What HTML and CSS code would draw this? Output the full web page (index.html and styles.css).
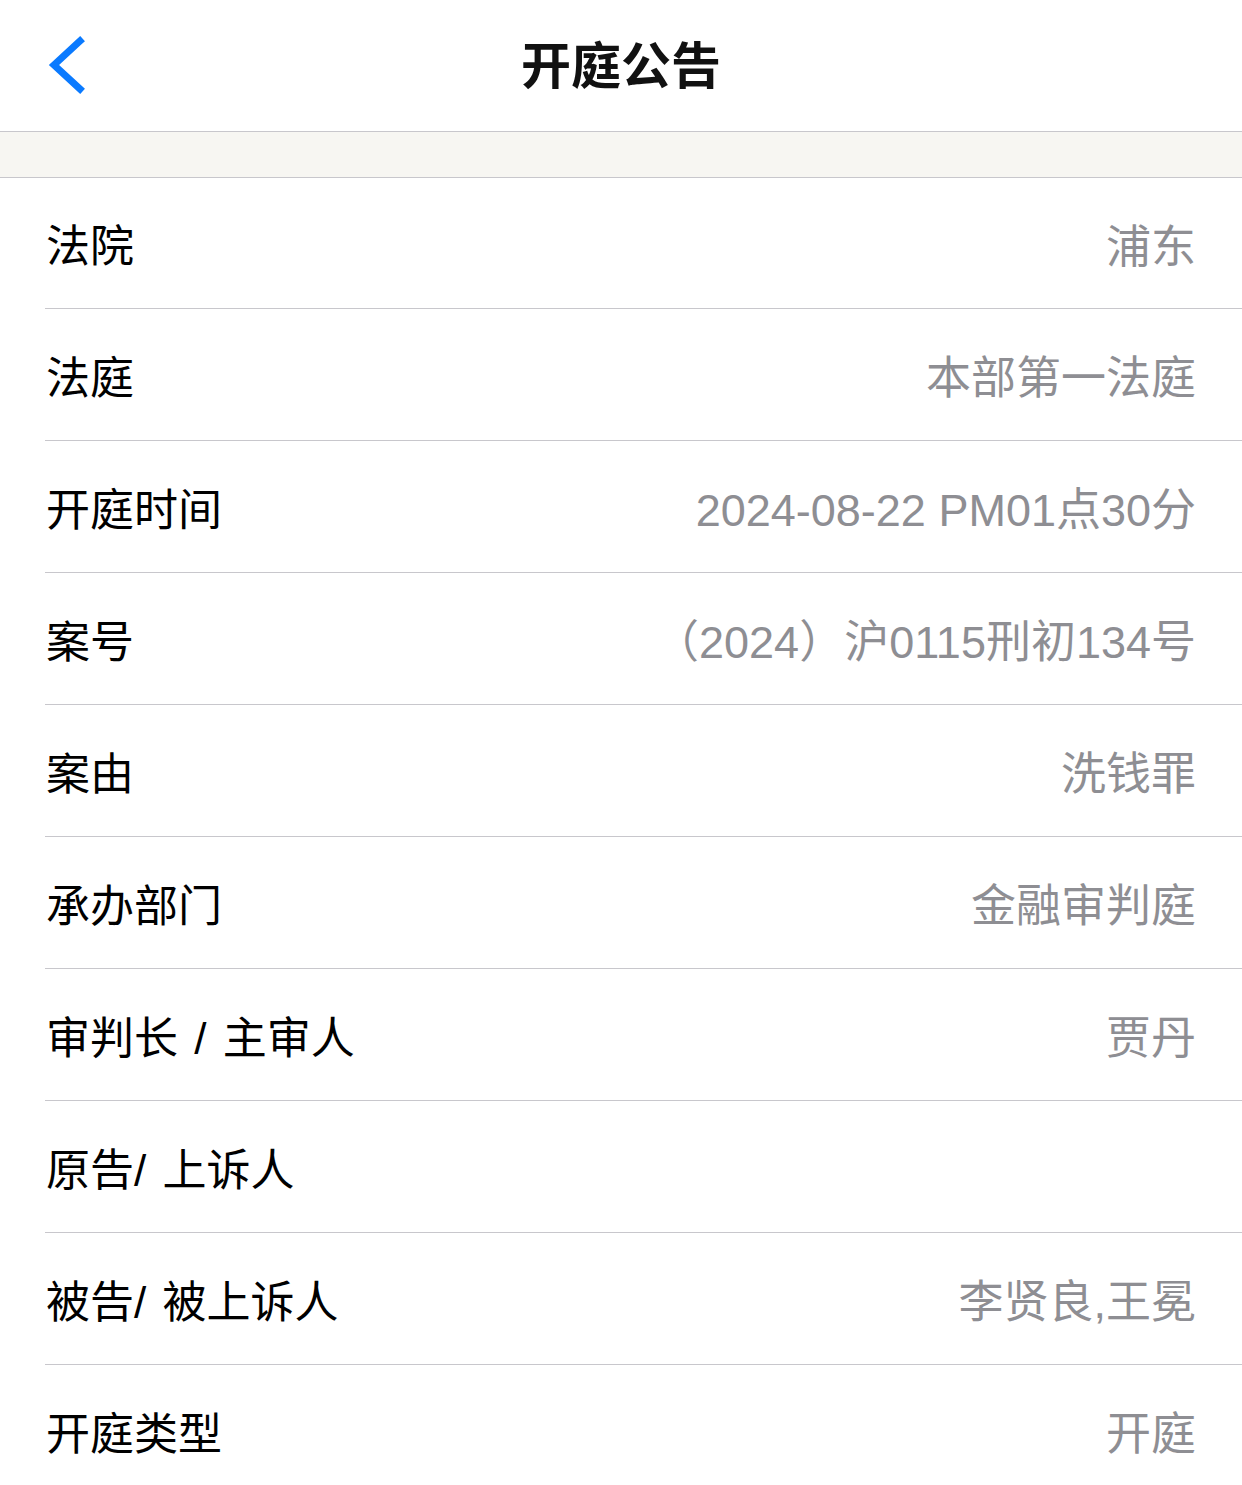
FILE: index.html
```html
<!DOCTYPE html>
<html lang="zh-CN">
<head>
    <meta charset="UTF-8">
    <meta name="viewport" content="width=device-width, initial-scale=1.0">
    <title>开庭公告</title>
    <link rel="stylesheet" href="styles.css">
</head>
<body>
    <header class="nav_bar">
        <button class="back_btn" aria-label="返回">
            <svg width="44" height="64" viewBox="0 0 44 64">
                <path d="M35 8 L9 32 L35 56" fill="none" stroke="#0a7aff" stroke-width="7" stroke-linecap="square" stroke-linejoin="miter"/>
            </svg>
        </button>
        <h1 class="nav_title">开庭公告</h1>
    </header>
    <div class="gap_band"></div>
    <main class="info_list">
        <div class="row first"><span class="label">法院</span><span class="value">浦东</span></div>
        <div class="row"><span class="label">法庭</span><span class="value">本部第一法庭</span></div>
        <div class="row"><span class="label">开庭时间</span><span class="value">2024-08-22 PM01点30分</span></div>
        <div class="row"><span class="label">案号</span><span class="value">（2024）沪0115刑初134号</span></div>
        <div class="row"><span class="label">案由</span><span class="value">洗钱罪</span></div>
        <div class="row"><span class="label">承办部门</span><span class="value">金融审判庭</span></div>
        <div class="row"><span class="label">审判长 / 主审人</span><span class="value">贾丹</span></div>
        <div class="row"><span class="label">原告/ 上诉人</span><span class="value"></span></div>
        <div class="row"><span class="label">被告/ 被上诉人</span><span class="value">李贤良,王冕</span></div>
        <div class="row"><span class="label">开庭类型</span><span class="value">开庭</span></div>
    </main>
</body>
</html>
```

FILE: styles.css
```css
body {
    margin: 0;
    background-color: #fff;
    font-family: "Liberation Sans", "Noto Sans CJK SC", sans-serif;
    color: #000;
}
.nav_bar {
    height: 131px;
    border-bottom: 1px solid #c8c7cc;
    display: flex;
    align-items: center;
    justify-content: center;
    position: relative;
}
.back_btn {
    position: absolute;
    left: 45px;
    top: 33px;
    padding: 0;
    border: none;
    background: none;
    display: flex;
}
.nav_title {
    margin: 0 0 7px 0;
    font-size: 50px;
    font-weight: 600;
    color: #111;
}
.gap_band {
    height: 45px;
    background-color: #f7f6f2;
    border-bottom: 1px solid #c8c7cc;
}
.info_list {
    padding-left: 45px;
}
.row {
    height: 131px;
    border-bottom: 1px solid #c8c7cc;
    display: flex;
    align-items: center;
    justify-content: space-between;
    padding-right: 46px;
    font-size: 44px;
}
.row.first {
    height: 130px;
}
.row:last-child {
    border-bottom: none;
}
.label {
    padding-left: 1px;
    color: #000;
    word-spacing: 4px;
}
.value {
    color: #8e8e93;
    font-size: 45px;
}
```
